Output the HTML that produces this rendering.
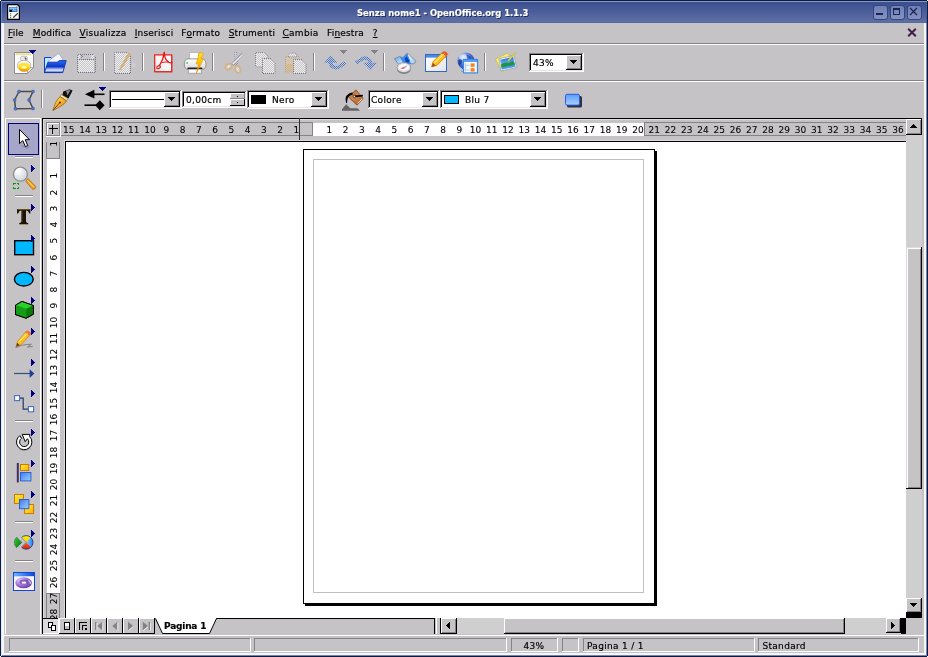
<!DOCTYPE html>
<html lang="it"><head><meta charset="utf-8"><title>Senza nome1 - OpenOffice.org 1.1.3</title>
<style>
html,body{margin:0;padding:0}
body{width:928px;height:657px;position:relative;overflow:hidden;background:#c6c3c6;font-family:"DejaVu Sans","Liberation Sans",sans-serif;font-size:9px;color:#000}
body div,body span,body svg{position:absolute;display:block}
.t{white-space:nowrap;line-height:11px;font-size:9px;-webkit-text-stroke:0.18px currentColor}
.t u{text-decoration:underline;text-decoration-thickness:1px;text-underline-offset:1px;display:inline;position:static}
.r,.v{-webkit-text-stroke:0.08px currentColor}
.s{letter-spacing:.32px}
.v{width:20px;height:11px;text-align:center;transform:rotate(-90deg);transform-origin:50% 50%}
svg{overflow:visible}
</style></head><body><div id="w" style="left:0;top:0;width:928px;height:657px;will-change:transform">
<div style="left:0;top:0;width:928px;height:23px;background:linear-gradient(#3e5494 0px,#3a5090 3px,#42558f 6px,#46599a 9px,#4c5d99 12px,#52639d 15px,#5869a1 18px,#5c6ea2 21.5px,#566a9f 22px,#566a9f 23px)"></div>
<div style="left:0px;top:0px;width:928px;height:1px;background:#0e1a40;"></div>
<div style="left:1px;top:1px;width:926px;height:1px;background:#8898c6;"></div>
<div style="left:0px;top:1px;width:1px;height:656px;background:#0c1a48;"></div>
<div style="left:1px;top:2px;width:1px;height:21px;background:#7488c0;"></div>
<div style="left:1px;top:23px;width:1px;height:633px;background:#e4e6f2;"></div>
<div style="left:2px;top:23px;width:2px;height:632px;background:#f6f6f6;"></div>
<div style="left:927px;top:1px;width:1px;height:656px;background:#0c1a48;"></div>
<div style="left:926px;top:2px;width:1px;height:21px;background:#4a5c98;"></div>
<div style="left:926px;top:23px;width:1px;height:633px;background:#7a84a6;"></div>
<div style="left:924px;top:23px;width:2px;height:632px;background:#f6f6f6;"></div>
<div style="left:0px;top:656px;width:928px;height:1px;background:#0c1a48;"></div>
<div style="left:2px;top:655px;width:925px;height:1px;background:#7a84a6;"></div>
<div style="left:2px;top:653px;width:924px;height:2px;background:#f6f6f6;"></div>
<div style="left:1px;top:653px;width:1px;height:3px;background:#e4e6f2;"></div>
<div style="left:0px;top:0px;width:1px;height:1px;background:#ffffff;"></div>
<div style="left:927px;top:0px;width:1px;height:1px;background:#ffffff;"></div>
<div style="left:0px;top:656px;width:1px;height:1px;background:#ffffff;"></div>
<div style="left:927px;top:656px;width:1px;height:1px;background:#ffffff;"></div>
<svg style="left:7px;top:4px" width="13" height="16" viewBox="0 0 13 16">
<path d="M0.6 0.6H10.4L12.4 2.6V15.4H0.6Z" fill="#f8f8f8" stroke="#000" stroke-width="1.2"/>
<path d="M9.2 1.2L11.8 3.8L9 3.6Z" fill="#b8b8b8"/>
<rect x="2" y="3" width="8.4" height="5" fill="#2a7cd4"/><rect x="2.6" y="3.6" width="7" height="1.6" fill="#8cc4f4"/>
<rect x="2.6" y="6" width="2.4" height="2" fill="#000"/><path d="M5.6 6.6L7 5.6L8 6.8L9 5.8" stroke="#d8ecff" stroke-width=".8" fill="none"/>
<rect x="3" y="9.2" width="1.2" height="1" fill="#555"/><rect x="3" y="11.2" width="1.2" height="1" fill="#555"/><rect x="3" y="13.2" width="1.2" height="1" fill="#555"/>
<path d="M6.2 13.6L10.8 9.2" stroke="#333" stroke-width="1.2"/>
</svg>
<span class="t" style="left:357px;top:6px;font-family:DejaVu Sans Condensed,DejaVu Sans,sans-serif;font-weight:bold;font-size:9.4px;color:#fff;letter-spacing:0px;text-shadow:1px 1px 0 #1c2a5c;line-height:13px">Senza nome1 - OpenOffice.org 1.1.3</span>
<div style="left:873px;top:5px;width:15px;height:15px;box-sizing:border-box;border-radius:3px;border:1px solid #35457d;background:linear-gradient(#7080b6,#8491c1)"></div>
<div style="left:890px;top:5px;width:15px;height:15px;box-sizing:border-box;border-radius:3px;border:1px solid #35457d;background:linear-gradient(#7080b6,#8491c1)"></div>
<div style="left:907px;top:5px;width:15px;height:15px;box-sizing:border-box;border-radius:3px;border:1px solid #35457d;background:linear-gradient(#7080b6,#8491c1)"></div>
<div style="left:876px;top:13px;width:7px;height:2px;background:#1a2450;"></div>
<div style="left:893px;top:8px;width:7px;height:7px;background:transparent;box-sizing:border-box;border:1px solid #1a2450;border-top-width:2px"></div>
<svg style="left:909px;top:7px" width="9" height="9" viewBox="0 0 9 9"><path d="M1 1L8 8M8 1L1 8" stroke="#1a2450" stroke-width="1.3"/></svg>
<span class="t" style="left:8.0px;top:28px;letter-spacing:0.18px"><u>F</u>ile</span>
<span class="t" style="left:32.8px;top:28px;letter-spacing:0.12px"><u>M</u>odifica</span>
<span class="t" style="left:79.6px;top:28px;letter-spacing:0.25px"><u>V</u>isualizza</span>
<span class="t" style="left:134.7px;top:28px;letter-spacing:0.19px"><u>I</u>nserisci</span>
<span class="t" style="left:181.3px;top:28px;letter-spacing:0.23px">F<u>o</u>rmato</span>
<span class="t" style="left:228.7px;top:28px;letter-spacing:0.19px"><u>S</u>trumenti</span>
<span class="t" style="left:282.5px;top:28px;letter-spacing:0.28px"><u>C</u>ambia</span>
<span class="t" style="left:327.1px;top:28px;letter-spacing:0.15px">Fi<u>n</u>estra</span>
<span class="t" style="left:372.8px;top:28px;letter-spacing:0.00px"><u>?</u></span>
<svg style="left:907px;top:28px" width="10" height="9" viewBox="0 0 10 9"><path d="M1.2 0.8L8.8 8.2M8.8 0.8L1.2 8.2" stroke="#42204a" stroke-width="2.1"/></svg>
<div style="left:4px;top:43px;width:920px;height:1px;background:#848284;"></div>
<div style="left:4px;top:44px;width:920px;height:1px;background:#ffffff;"></div>
<div style="left:4px;top:80px;width:920px;height:1px;background:#848284;"></div>
<div style="left:4px;top:81px;width:920px;height:1px;background:#ffffff;"></div>
<div style="left:103px;top:53px;width:1px;height:18px;background:#848284;"></div>
<div style="left:104px;top:53px;width:1px;height:18px;background:#ffffff;"></div>
<div style="left:142px;top:53px;width:1px;height:18px;background:#848284;"></div>
<div style="left:143px;top:53px;width:1px;height:18px;background:#ffffff;"></div>
<div style="left:212px;top:53px;width:1px;height:18px;background:#848284;"></div>
<div style="left:213px;top:53px;width:1px;height:18px;background:#ffffff;"></div>
<div style="left:313px;top:53px;width:1px;height:18px;background:#848284;"></div>
<div style="left:314px;top:53px;width:1px;height:18px;background:#ffffff;"></div>
<div style="left:383px;top:53px;width:1px;height:18px;background:#848284;"></div>
<div style="left:384px;top:53px;width:1px;height:18px;background:#ffffff;"></div>
<div style="left:484px;top:53px;width:1px;height:18px;background:#848284;"></div>
<div style="left:485px;top:53px;width:1px;height:18px;background:#ffffff;"></div>
<div style="left:529px;top:53px;width:55px;height:19px;background:#ffffff;"></div>
<div style="left:529px;top:53px;width:55px;height:1px;background:#848284;"></div>
<div style="left:529px;top:53px;width:1px;height:19px;background:#848284;"></div>
<div style="left:530px;top:54px;width:53px;height:1px;background:#000000;"></div>
<div style="left:530px;top:54px;width:1px;height:17px;background:#000000;"></div>
<div style="left:529px;top:71px;width:55px;height:1px;background:#ffffff;"></div>
<div style="left:583px;top:53px;width:1px;height:19px;background:#ffffff;"></div>
<div style="left:530px;top:70px;width:53px;height:1px;background:#e7e3e7;"></div>
<div style="left:582px;top:54px;width:1px;height:17px;background:#e7e3e7;"></div>
<div style="left:566px;top:55px;width:16px;height:15px;background:#c6c3c6;"></div>
<div style="left:566px;top:55px;width:16px;height:1px;background:#ffffff;"></div>
<div style="left:566px;top:55px;width:1px;height:15px;background:#ffffff;"></div>
<div style="left:567px;top:68px;width:14px;height:1px;background:#848284;"></div>
<div style="left:580px;top:56px;width:1px;height:13px;background:#848284;"></div>
<div style="left:566px;top:69px;width:16px;height:1px;background:#000000;"></div>
<div style="left:581px;top:55px;width:1px;height:15px;background:#000000;"></div>
<div style="left:570px;top:60px;width:7px;height:1px;background:#000000;"></div>
<div style="left:571px;top:61px;width:5px;height:1px;background:#000000;"></div>
<div style="left:572px;top:62px;width:3px;height:1px;background:#000000;"></div>
<div style="left:573px;top:63px;width:1px;height:1px;background:#000000;"></div>
<span class="t s" style="left:533px;top:58px;">43%</span>
<div style="left:41px;top:90px;width:1px;height:18px;background:#848284;"></div>
<div style="left:42px;top:90px;width:1px;height:18px;background:#ffffff;"></div>
<div style="left:109px;top:90px;width:73px;height:19px;background:#ffffff;"></div>
<div style="left:109px;top:90px;width:73px;height:1px;background:#848284;"></div>
<div style="left:109px;top:90px;width:1px;height:19px;background:#848284;"></div>
<div style="left:110px;top:91px;width:71px;height:1px;background:#000000;"></div>
<div style="left:110px;top:91px;width:1px;height:17px;background:#000000;"></div>
<div style="left:109px;top:108px;width:73px;height:1px;background:#ffffff;"></div>
<div style="left:181px;top:90px;width:1px;height:19px;background:#ffffff;"></div>
<div style="left:110px;top:107px;width:71px;height:1px;background:#e7e3e7;"></div>
<div style="left:180px;top:91px;width:1px;height:17px;background:#e7e3e7;"></div>
<div style="left:164px;top:92px;width:16px;height:15px;background:#c6c3c6;"></div>
<div style="left:164px;top:92px;width:16px;height:1px;background:#ffffff;"></div>
<div style="left:164px;top:92px;width:1px;height:15px;background:#ffffff;"></div>
<div style="left:165px;top:105px;width:14px;height:1px;background:#848284;"></div>
<div style="left:178px;top:93px;width:1px;height:13px;background:#848284;"></div>
<div style="left:164px;top:106px;width:16px;height:1px;background:#000000;"></div>
<div style="left:179px;top:92px;width:1px;height:15px;background:#000000;"></div>
<div style="left:168px;top:97px;width:7px;height:1px;background:#000000;"></div>
<div style="left:169px;top:98px;width:5px;height:1px;background:#000000;"></div>
<div style="left:170px;top:99px;width:3px;height:1px;background:#000000;"></div>
<div style="left:171px;top:100px;width:1px;height:1px;background:#000000;"></div>
<div style="left:112px;top:99px;width:52px;height:1px;background:#000000;"></div>
<div style="left:182px;top:91px;width:65px;height:17px;background:#ffffff;"></div>
<div style="left:182px;top:91px;width:65px;height:1px;background:#848284;"></div>
<div style="left:182px;top:91px;width:1px;height:17px;background:#848284;"></div>
<div style="left:183px;top:92px;width:63px;height:1px;background:#000000;"></div>
<div style="left:183px;top:92px;width:1px;height:15px;background:#000000;"></div>
<div style="left:182px;top:107px;width:65px;height:1px;background:#ffffff;"></div>
<div style="left:246px;top:91px;width:1px;height:17px;background:#ffffff;"></div>
<div style="left:183px;top:106px;width:63px;height:1px;background:#e7e3e7;"></div>
<div style="left:245px;top:92px;width:1px;height:15px;background:#e7e3e7;"></div>
<span class="t s" style="left:186px;top:95px;">0,00cm</span>
<div style="left:230px;top:93px;width:15px;height:6px;background:#c6c3c6;"></div>
<div style="left:230px;top:93px;width:15px;height:1px;background:#ffffff;"></div>
<div style="left:230px;top:93px;width:1px;height:6px;background:#ffffff;"></div>
<div style="left:230px;top:98px;width:15px;height:1px;background:#848284;"></div>
<div style="left:244px;top:93px;width:1px;height:6px;background:#848284;"></div>
<div style="left:230px;top:99px;width:15px;height:7px;background:#c6c3c6;"></div>
<div style="left:230px;top:99px;width:15px;height:1px;background:#ffffff;"></div>
<div style="left:230px;top:99px;width:1px;height:7px;background:#ffffff;"></div>
<div style="left:230px;top:105px;width:15px;height:1px;background:#000000;"></div>
<div style="left:244px;top:99px;width:1px;height:7px;background:#000000;"></div>
<div style="left:237px;top:96px;width:1px;height:1px;background:#000000;"></div>
<div style="left:237px;top:102px;width:1px;height:1px;background:#000000;"></div>
<div style="left:247px;top:90px;width:82px;height:19px;background:#ffffff;"></div>
<div style="left:247px;top:90px;width:82px;height:1px;background:#848284;"></div>
<div style="left:247px;top:90px;width:1px;height:19px;background:#848284;"></div>
<div style="left:248px;top:91px;width:80px;height:1px;background:#000000;"></div>
<div style="left:248px;top:91px;width:1px;height:17px;background:#000000;"></div>
<div style="left:247px;top:108px;width:82px;height:1px;background:#ffffff;"></div>
<div style="left:328px;top:90px;width:1px;height:19px;background:#ffffff;"></div>
<div style="left:248px;top:107px;width:80px;height:1px;background:#e7e3e7;"></div>
<div style="left:327px;top:91px;width:1px;height:17px;background:#e7e3e7;"></div>
<div style="left:311px;top:92px;width:16px;height:15px;background:#c6c3c6;"></div>
<div style="left:311px;top:92px;width:16px;height:1px;background:#ffffff;"></div>
<div style="left:311px;top:92px;width:1px;height:15px;background:#ffffff;"></div>
<div style="left:312px;top:105px;width:14px;height:1px;background:#848284;"></div>
<div style="left:325px;top:93px;width:1px;height:13px;background:#848284;"></div>
<div style="left:311px;top:106px;width:16px;height:1px;background:#000000;"></div>
<div style="left:326px;top:92px;width:1px;height:15px;background:#000000;"></div>
<div style="left:315px;top:97px;width:7px;height:1px;background:#000000;"></div>
<div style="left:316px;top:98px;width:5px;height:1px;background:#000000;"></div>
<div style="left:317px;top:99px;width:3px;height:1px;background:#000000;"></div>
<div style="left:318px;top:100px;width:1px;height:1px;background:#000000;"></div>
<div style="left:251px;top:95px;width:15px;height:9px;background:#000000;"></div>
<span class="t s" style="left:272px;top:95px;">Nero</span>
<div style="left:368px;top:90px;width:72px;height:19px;background:#ffffff;"></div>
<div style="left:368px;top:90px;width:72px;height:1px;background:#848284;"></div>
<div style="left:368px;top:90px;width:1px;height:19px;background:#848284;"></div>
<div style="left:369px;top:91px;width:70px;height:1px;background:#000000;"></div>
<div style="left:369px;top:91px;width:1px;height:17px;background:#000000;"></div>
<div style="left:368px;top:108px;width:72px;height:1px;background:#ffffff;"></div>
<div style="left:439px;top:90px;width:1px;height:19px;background:#ffffff;"></div>
<div style="left:369px;top:107px;width:70px;height:1px;background:#e7e3e7;"></div>
<div style="left:438px;top:91px;width:1px;height:17px;background:#e7e3e7;"></div>
<div style="left:422px;top:92px;width:16px;height:15px;background:#c6c3c6;"></div>
<div style="left:422px;top:92px;width:16px;height:1px;background:#ffffff;"></div>
<div style="left:422px;top:92px;width:1px;height:15px;background:#ffffff;"></div>
<div style="left:423px;top:105px;width:14px;height:1px;background:#848284;"></div>
<div style="left:436px;top:93px;width:1px;height:13px;background:#848284;"></div>
<div style="left:422px;top:106px;width:16px;height:1px;background:#000000;"></div>
<div style="left:437px;top:92px;width:1px;height:15px;background:#000000;"></div>
<div style="left:426px;top:97px;width:7px;height:1px;background:#000000;"></div>
<div style="left:427px;top:98px;width:5px;height:1px;background:#000000;"></div>
<div style="left:428px;top:99px;width:3px;height:1px;background:#000000;"></div>
<div style="left:429px;top:100px;width:1px;height:1px;background:#000000;"></div>
<span class="t s" style="left:371px;top:95px;">Colore</span>
<div style="left:440px;top:90px;width:108px;height:19px;background:#ffffff;"></div>
<div style="left:440px;top:90px;width:108px;height:1px;background:#848284;"></div>
<div style="left:440px;top:90px;width:1px;height:19px;background:#848284;"></div>
<div style="left:441px;top:91px;width:106px;height:1px;background:#000000;"></div>
<div style="left:441px;top:91px;width:1px;height:17px;background:#000000;"></div>
<div style="left:440px;top:108px;width:108px;height:1px;background:#ffffff;"></div>
<div style="left:547px;top:90px;width:1px;height:19px;background:#ffffff;"></div>
<div style="left:441px;top:107px;width:106px;height:1px;background:#e7e3e7;"></div>
<div style="left:546px;top:91px;width:1px;height:17px;background:#e7e3e7;"></div>
<div style="left:530px;top:92px;width:16px;height:15px;background:#c6c3c6;"></div>
<div style="left:530px;top:92px;width:16px;height:1px;background:#ffffff;"></div>
<div style="left:530px;top:92px;width:1px;height:15px;background:#ffffff;"></div>
<div style="left:531px;top:105px;width:14px;height:1px;background:#848284;"></div>
<div style="left:544px;top:93px;width:1px;height:13px;background:#848284;"></div>
<div style="left:530px;top:106px;width:16px;height:1px;background:#000000;"></div>
<div style="left:545px;top:92px;width:1px;height:15px;background:#000000;"></div>
<div style="left:534px;top:97px;width:7px;height:1px;background:#000000;"></div>
<div style="left:535px;top:98px;width:5px;height:1px;background:#000000;"></div>
<div style="left:536px;top:99px;width:3px;height:1px;background:#000000;"></div>
<div style="left:537px;top:100px;width:1px;height:1px;background:#000000;"></div>
<div style="left:444px;top:95px;width:15px;height:9px;background:#00baff;box-sizing:border-box;border:1px solid #000"></div>
<span class="t s" style="left:465px;top:95px;">Blu 7</span>
<div style="left:42px;top:118px;width:880px;height:1px;background:#000000;"></div>
<div style="left:42px;top:118px;width:1px;height:516px;background:#000000;"></div>
<div style="left:43px;top:119px;width:863px;height:1px;background:#dedbde;"></div>
<div style="left:43px;top:119px;width:1px;height:499px;background:#dedbde;"></div>
<div style="left:5px;top:118px;width:36px;height:1px;background:#ffffff;"></div>
<div style="left:5px;top:118px;width:1px;height:517px;background:#ffffff;"></div>
<div style="left:40px;top:118px;width:1px;height:516px;background:#ffffff;"></div>
<div style="left:15px;top:156px;width:18px;height:1px;background:#848284;"></div>
<div style="left:15px;top:157px;width:18px;height:1px;background:#ffffff;"></div>
<div style="left:15px;top:195px;width:18px;height:1px;background:#848284;"></div>
<div style="left:15px;top:196px;width:18px;height:1px;background:#ffffff;"></div>
<div style="left:15px;top:420px;width:18px;height:1px;background:#848284;"></div>
<div style="left:15px;top:421px;width:18px;height:1px;background:#ffffff;"></div>
<div style="left:15px;top:521px;width:18px;height:1px;background:#848284;"></div>
<div style="left:15px;top:522px;width:18px;height:1px;background:#ffffff;"></div>
<div style="left:15px;top:560px;width:18px;height:1px;background:#848284;"></div>
<div style="left:15px;top:561px;width:18px;height:1px;background:#ffffff;"></div>
<div style="left:8px;top:123px;width:31px;height:32px;background:#a5a6c8;box-sizing:border-box;border:1px solid #000084"></div>
<div style="left:46px;top:122px;width:15px;height:1px;background:#848284;"></div>
<div style="left:46px;top:122px;width:1px;height:15px;background:#848284;"></div>
<div style="left:47px;top:123px;width:13px;height:1px;background:#ffffff;"></div>
<div style="left:47px;top:123px;width:1px;height:13px;background:#ffffff;"></div>
<div style="left:47px;top:135px;width:13px;height:1px;background:#848284;"></div>
<div style="left:59px;top:123px;width:1px;height:13px;background:#848284;"></div>
<div style="left:46px;top:136px;width:15px;height:1px;background:#ffffff;"></div>
<div style="left:60px;top:122px;width:1px;height:15px;background:#ffffff;"></div>
<div style="left:52px;top:125px;width:1px;height:9px;background:#000000;"></div>
<div style="left:49px;top:128px;width:9px;height:1px;background:#000000;"></div>
<div style="left:61px;top:122px;width:252px;height:1px;background:#848284;"></div>
<div style="left:61px;top:135px;width:252px;height:1px;background:#848284;"></div>
<div style="left:312px;top:122px;width:1px;height:14px;background:#848284;"></div>
<div style="left:644px;top:122px;width:262px;height:1px;background:#848284;"></div>
<div style="left:644px;top:135px;width:262px;height:1px;background:#848284;"></div>
<div style="left:644px;top:122px;width:1px;height:14px;background:#848284;"></div>
<div style="left:313px;top:123px;width:331px;height:13px;background:#ffffff;"></div>
<div style="left:299px;top:118px;width:1px;height:23px;background:#303030;"></div>
<span class="t r" style="left:286.25px;top:125px;width:20px;text-align:center">1</span>
<span class="t r" style="left:270.0px;top:125px;width:20px;text-align:center">2</span>
<span class="t r" style="left:253.75px;top:125px;width:20px;text-align:center">3</span>
<span class="t r" style="left:237.5px;top:125px;width:20px;text-align:center">4</span>
<span class="t r" style="left:221.25px;top:125px;width:20px;text-align:center">5</span>
<span class="t r" style="left:205.0px;top:125px;width:20px;text-align:center">6</span>
<span class="t r" style="left:188.75px;top:125px;width:20px;text-align:center">7</span>
<span class="t r" style="left:172.5px;top:125px;width:20px;text-align:center">8</span>
<span class="t r" style="left:156.25px;top:125px;width:20px;text-align:center">9</span>
<span class="t r" style="left:140.0px;top:125px;width:20px;text-align:center">10</span>
<span class="t r" style="left:123.75px;top:125px;width:20px;text-align:center">11</span>
<span class="t r" style="left:107.5px;top:125px;width:20px;text-align:center">12</span>
<span class="t r" style="left:91.25px;top:125px;width:20px;text-align:center">13</span>
<span class="t r" style="left:75.0px;top:125px;width:20px;text-align:center">14</span>
<span class="t r" style="left:58.75px;top:125px;width:20px;text-align:center">15</span>
<span class="t r" style="left:319.25px;top:125px;width:20px;text-align:center">1</span>
<span class="t r" style="left:335.5px;top:125px;width:20px;text-align:center">2</span>
<span class="t r" style="left:351.75px;top:125px;width:20px;text-align:center">3</span>
<span class="t r" style="left:368.0px;top:125px;width:20px;text-align:center">4</span>
<span class="t r" style="left:384.25px;top:125px;width:20px;text-align:center">5</span>
<span class="t r" style="left:400.5px;top:125px;width:20px;text-align:center">6</span>
<span class="t r" style="left:416.75px;top:125px;width:20px;text-align:center">7</span>
<span class="t r" style="left:433.0px;top:125px;width:20px;text-align:center">8</span>
<span class="t r" style="left:449.25px;top:125px;width:20px;text-align:center">9</span>
<span class="t r" style="left:465.5px;top:125px;width:20px;text-align:center">10</span>
<span class="t r" style="left:481.75px;top:125px;width:20px;text-align:center">11</span>
<span class="t r" style="left:498.0px;top:125px;width:20px;text-align:center">12</span>
<span class="t r" style="left:514.25px;top:125px;width:20px;text-align:center">13</span>
<span class="t r" style="left:530.5px;top:125px;width:20px;text-align:center">14</span>
<span class="t r" style="left:546.75px;top:125px;width:20px;text-align:center">15</span>
<span class="t r" style="left:563.0px;top:125px;width:20px;text-align:center">16</span>
<span class="t r" style="left:579.25px;top:125px;width:20px;text-align:center">17</span>
<span class="t r" style="left:595.5px;top:125px;width:20px;text-align:center">18</span>
<span class="t r" style="left:611.75px;top:125px;width:20px;text-align:center">19</span>
<span class="t r" style="left:628.0px;top:125px;width:20px;text-align:center">20</span>
<span class="t r" style="left:644.25px;top:125px;width:20px;text-align:center">21</span>
<span class="t r" style="left:660.5px;top:125px;width:20px;text-align:center">22</span>
<span class="t r" style="left:676.75px;top:125px;width:20px;text-align:center">23</span>
<span class="t r" style="left:693.0px;top:125px;width:20px;text-align:center">24</span>
<span class="t r" style="left:709.25px;top:125px;width:20px;text-align:center">25</span>
<span class="t r" style="left:725.5px;top:125px;width:20px;text-align:center">26</span>
<span class="t r" style="left:741.75px;top:125px;width:20px;text-align:center">27</span>
<span class="t r" style="left:758.0px;top:125px;width:20px;text-align:center">28</span>
<span class="t r" style="left:774.25px;top:125px;width:20px;text-align:center">29</span>
<span class="t r" style="left:790.5px;top:125px;width:20px;text-align:center">30</span>
<span class="t r" style="left:806.75px;top:125px;width:20px;text-align:center">31</span>
<span class="t r" style="left:823.0px;top:125px;width:20px;text-align:center">32</span>
<span class="t r" style="left:839.25px;top:125px;width:20px;text-align:center">33</span>
<span class="t r" style="left:855.5px;top:125px;width:20px;text-align:center">34</span>
<span class="t r" style="left:871.75px;top:125px;width:20px;text-align:center">35</span>
<span class="t r" style="left:888.0px;top:125px;width:20px;text-align:center">36</span>
<div style="left:46px;top:142px;width:1px;height:17px;background:#848284;"></div>
<div style="left:59px;top:142px;width:1px;height:17px;background:#848284;"></div>
<div style="left:46px;top:158px;width:14px;height:1px;background:#848284;"></div>
<div style="left:46px;top:593px;width:1px;height:25px;background:#848284;"></div>
<div style="left:59px;top:593px;width:1px;height:25px;background:#848284;"></div>
<div style="left:46px;top:593px;width:14px;height:1px;background:#848284;"></div>
<div style="left:47px;top:159px;width:13px;height:434px;background:#ffffff;"></div>
<div style="left:44px;top:142px;width:18px;height:476px;overflow:hidden">
<span class="t v" style="left:0px;top:-4.25px">1</span>
<span class="t v" style="left:0px;top:28.25px">1</span>
<span class="t v" style="left:0px;top:44.50px">2</span>
<span class="t v" style="left:0px;top:60.75px">3</span>
<span class="t v" style="left:0px;top:77.00px">4</span>
<span class="t v" style="left:0px;top:93.25px">5</span>
<span class="t v" style="left:0px;top:109.50px">6</span>
<span class="t v" style="left:0px;top:125.75px">7</span>
<span class="t v" style="left:0px;top:142.00px">8</span>
<span class="t v" style="left:0px;top:158.25px">9</span>
<span class="t v" style="left:0px;top:174.50px">10</span>
<span class="t v" style="left:0px;top:190.75px">11</span>
<span class="t v" style="left:0px;top:207.00px">12</span>
<span class="t v" style="left:0px;top:223.25px">13</span>
<span class="t v" style="left:0px;top:239.50px">14</span>
<span class="t v" style="left:0px;top:255.75px">15</span>
<span class="t v" style="left:0px;top:272.00px">16</span>
<span class="t v" style="left:0px;top:288.25px">17</span>
<span class="t v" style="left:0px;top:304.50px">18</span>
<span class="t v" style="left:0px;top:320.75px">19</span>
<span class="t v" style="left:0px;top:337.00px">20</span>
<span class="t v" style="left:0px;top:353.25px">21</span>
<span class="t v" style="left:0px;top:369.50px">22</span>
<span class="t v" style="left:0px;top:385.75px">23</span>
<span class="t v" style="left:0px;top:402.00px">24</span>
<span class="t v" style="left:0px;top:418.25px">25</span>
<span class="t v" style="left:0px;top:434.50px">26</span>
<span class="t v" style="left:0px;top:450.75px">27</span>
<span class="t v" style="left:0px;top:467.00px">28</span>
</div>
<div style="left:64px;top:140px;width:842px;height:1px;background:#dedbde;"></div>
<div style="left:64px;top:140px;width:1px;height:478px;background:#dedbde;"></div>
<div style="left:65px;top:141px;width:841px;height:1px;background:#000000;"></div>
<div style="left:65px;top:141px;width:1px;height:477px;background:#000000;"></div>
<div style="left:66px;top:142px;width:840px;height:476px;background:#ffffff;"></div>
<div style="left:305px;top:151px;width:352px;height:455px;background:#000000;"></div>
<div style="left:303px;top:149px;width:352px;height:455px;background:#ffffff;box-sizing:border-box;border:1px solid #000"></div>
<div style="left:313px;top:159px;width:331px;height:434px;background:transparent;box-sizing:border-box;border:1px solid #c0c0c0"></div>
<div style="left:906px;top:119px;width:16px;height:499px;background:#cecfce;"></div>
<div style="left:906px;top:119px;width:16px;height:16px;background:#c6c3c6;"></div>
<div style="left:906px;top:119px;width:16px;height:1px;background:#ffffff;"></div>
<div style="left:906px;top:119px;width:1px;height:16px;background:#ffffff;"></div>
<div style="left:907px;top:133px;width:14px;height:1px;background:#848284;"></div>
<div style="left:920px;top:120px;width:1px;height:14px;background:#848284;"></div>
<div style="left:906px;top:134px;width:16px;height:1px;background:#000000;"></div>
<div style="left:921px;top:119px;width:1px;height:16px;background:#000000;"></div>
<div style="left:913px;top:124px;width:1px;height:1px;background:#000000;"></div>
<div style="left:912px;top:125px;width:3px;height:1px;background:#000000;"></div>
<div style="left:911px;top:126px;width:5px;height:1px;background:#000000;"></div>
<div style="left:910px;top:127px;width:7px;height:1px;background:#000000;"></div>
<div style="left:906px;top:247px;width:16px;height:242px;background:#c6c3c6;"></div>
<div style="left:906px;top:247px;width:16px;height:1px;background:#ffffff;"></div>
<div style="left:906px;top:247px;width:1px;height:242px;background:#ffffff;"></div>
<div style="left:907px;top:487px;width:14px;height:1px;background:#848284;"></div>
<div style="left:920px;top:248px;width:1px;height:240px;background:#848284;"></div>
<div style="left:906px;top:488px;width:16px;height:1px;background:#000000;"></div>
<div style="left:921px;top:247px;width:1px;height:242px;background:#000000;"></div>
<div style="left:906px;top:247px;width:1px;height:242px;background:#dedbde;"></div>
<div style="left:906px;top:247px;width:16px;height:1px;background:#dedbde;"></div>
<div style="left:907px;top:248px;width:1px;height:240px;background:#ffffff;"></div>
<div style="left:907px;top:248px;width:14px;height:1px;background:#ffffff;"></div>
<div style="left:906px;top:488px;width:16px;height:1px;background:#000000;"></div>
<div style="left:921px;top:247px;width:1px;height:242px;background:#000000;"></div>
<div style="left:906px;top:598px;width:16px;height:15px;background:#c6c3c6;"></div>
<div style="left:906px;top:598px;width:16px;height:1px;background:#ffffff;"></div>
<div style="left:906px;top:598px;width:1px;height:15px;background:#ffffff;"></div>
<div style="left:907px;top:611px;width:14px;height:1px;background:#848284;"></div>
<div style="left:920px;top:599px;width:1px;height:13px;background:#848284;"></div>
<div style="left:906px;top:612px;width:16px;height:1px;background:#000000;"></div>
<div style="left:921px;top:598px;width:1px;height:15px;background:#000000;"></div>
<div style="left:910px;top:603px;width:7px;height:1px;background:#000000;"></div>
<div style="left:911px;top:604px;width:5px;height:1px;background:#000000;"></div>
<div style="left:912px;top:605px;width:3px;height:1px;background:#000000;"></div>
<div style="left:913px;top:606px;width:1px;height:1px;background:#000000;"></div>
<div style="left:906px;top:613px;width:16px;height:5px;background:#000000;"></div>
<div style="left:906px;top:618px;width:16px;height:16px;background:#c6c3c6;"></div>
<div style="left:43px;top:618px;width:392px;height:16px;background:#c6c3c6;"></div>
<div style="left:43px;top:618px;width:16px;height:1px;background:#000000;"></div>
<div style="left:216px;top:618px;width:219px;height:1px;background:#000000;"></div>
<div style="left:434px;top:618px;width:1px;height:16px;background:#000000;"></div>
<div style="left:43px;top:619px;width:15px;height:14px;background:#dcdadc;"></div>
<div style="left:58px;top:618px;width:1px;height:16px;background:#ffffff;"></div>
<div style="left:43px;top:633px;width:16px;height:1px;background:#ffffff;"></div>
<div style="left:59px;top:618px;width:16px;height:16px;background:#c6c3c6;"></div>
<div style="left:59px;top:618px;width:16px;height:1px;background:#ffffff;"></div>
<div style="left:59px;top:618px;width:1px;height:16px;background:#ffffff;"></div>
<div style="left:59px;top:633px;width:16px;height:1px;background:#000000;"></div>
<div style="left:74px;top:618px;width:1px;height:16px;background:#000000;"></div>
<div style="left:75px;top:618px;width:16px;height:16px;background:#c6c3c6;"></div>
<div style="left:75px;top:618px;width:16px;height:1px;background:#ffffff;"></div>
<div style="left:75px;top:618px;width:1px;height:16px;background:#ffffff;"></div>
<div style="left:75px;top:633px;width:16px;height:1px;background:#000000;"></div>
<div style="left:90px;top:618px;width:1px;height:16px;background:#000000;"></div>
<div style="left:91px;top:618px;width:16px;height:16px;background:#c6c3c6;"></div>
<div style="left:91px;top:618px;width:16px;height:1px;background:#ffffff;"></div>
<div style="left:91px;top:618px;width:1px;height:16px;background:#ffffff;"></div>
<div style="left:91px;top:633px;width:16px;height:1px;background:#000000;"></div>
<div style="left:106px;top:618px;width:1px;height:16px;background:#000000;"></div>
<div style="left:107px;top:618px;width:16px;height:16px;background:#c6c3c6;"></div>
<div style="left:107px;top:618px;width:16px;height:1px;background:#ffffff;"></div>
<div style="left:107px;top:618px;width:1px;height:16px;background:#ffffff;"></div>
<div style="left:107px;top:633px;width:16px;height:1px;background:#000000;"></div>
<div style="left:122px;top:618px;width:1px;height:16px;background:#000000;"></div>
<div style="left:123px;top:618px;width:16px;height:16px;background:#c6c3c6;"></div>
<div style="left:123px;top:618px;width:16px;height:1px;background:#ffffff;"></div>
<div style="left:123px;top:618px;width:1px;height:16px;background:#ffffff;"></div>
<div style="left:123px;top:633px;width:16px;height:1px;background:#000000;"></div>
<div style="left:138px;top:618px;width:1px;height:16px;background:#000000;"></div>
<div style="left:139px;top:618px;width:16px;height:16px;background:#c6c3c6;"></div>
<div style="left:139px;top:618px;width:16px;height:1px;background:#ffffff;"></div>
<div style="left:139px;top:618px;width:1px;height:16px;background:#ffffff;"></div>
<div style="left:139px;top:633px;width:16px;height:1px;background:#000000;"></div>
<div style="left:154px;top:618px;width:1px;height:16px;background:#000000;"></div>
<svg style="left:154px;top:618px" width="66" height="16" viewBox="0 0 66 16"><path d="M1.5 0.5L8.5 15.5H55.5L62.5 0.5" fill="#fff" stroke="#000" stroke-width="1"/><rect x="2" y="0" width="60" height="1" fill="#fff"/></svg>
<span class="t" style="left:164px;top:621px;font-weight:bold;letter-spacing:-0.2px">Pagina 1</span>
<div style="left:436px;top:618px;width:1px;height:16px;background:#ffffff;"></div>
<div style="left:440px;top:618px;width:1px;height:16px;background:#000000;"></div>
<div style="left:441px;top:618px;width:465px;height:16px;background:#cecfce;"></div>
<div style="left:441px;top:618px;width:16px;height:16px;background:#c6c3c6;"></div>
<div style="left:441px;top:618px;width:16px;height:1px;background:#ffffff;"></div>
<div style="left:441px;top:618px;width:1px;height:16px;background:#ffffff;"></div>
<div style="left:442px;top:632px;width:14px;height:1px;background:#848284;"></div>
<div style="left:455px;top:619px;width:1px;height:14px;background:#848284;"></div>
<div style="left:441px;top:633px;width:16px;height:1px;background:#000000;"></div>
<div style="left:456px;top:618px;width:1px;height:16px;background:#000000;"></div>
<div style="left:449px;top:622px;width:1px;height:7px;background:#000000;"></div>
<div style="left:448px;top:623px;width:1px;height:5px;background:#000000;"></div>
<div style="left:447px;top:624px;width:1px;height:3px;background:#000000;"></div>
<div style="left:446px;top:625px;width:1px;height:1px;background:#000000;"></div>
<div style="left:504px;top:618px;width:341px;height:16px;background:#c6c3c6;"></div>
<div style="left:504px;top:618px;width:341px;height:1px;background:#ffffff;"></div>
<div style="left:504px;top:618px;width:1px;height:16px;background:#ffffff;"></div>
<div style="left:505px;top:632px;width:339px;height:1px;background:#848284;"></div>
<div style="left:843px;top:619px;width:1px;height:14px;background:#848284;"></div>
<div style="left:504px;top:633px;width:341px;height:1px;background:#000000;"></div>
<div style="left:844px;top:618px;width:1px;height:16px;background:#000000;"></div>
<div style="left:886px;top:618px;width:15px;height:15px;background:#c6c3c6;"></div>
<div style="left:886px;top:618px;width:15px;height:1px;background:#ffffff;"></div>
<div style="left:886px;top:618px;width:1px;height:15px;background:#ffffff;"></div>
<div style="left:887px;top:631px;width:13px;height:1px;background:#848284;"></div>
<div style="left:899px;top:619px;width:1px;height:13px;background:#848284;"></div>
<div style="left:886px;top:632px;width:15px;height:1px;background:#000000;"></div>
<div style="left:900px;top:618px;width:1px;height:15px;background:#000000;"></div>
<div style="left:891px;top:622px;width:1px;height:7px;background:#000000;"></div>
<div style="left:892px;top:623px;width:1px;height:5px;background:#000000;"></div>
<div style="left:893px;top:624px;width:1px;height:3px;background:#000000;"></div>
<div style="left:894px;top:625px;width:1px;height:1px;background:#000000;"></div>
<div style="left:901px;top:618px;width:5px;height:16px;background:#000000;"></div>
<div style="left:4px;top:634px;width:920px;height:1px;background:#c6c3c6;"></div>
<div style="left:4px;top:635px;width:920px;height:1px;background:#ffffff;"></div>
<div style="left:9px;top:638px;width:242px;height:1px;background:#848284;"></div>
<div style="left:9px;top:638px;width:1px;height:14px;background:#848284;"></div>
<div style="left:9px;top:651px;width:242px;height:1px;background:#ffffff;"></div>
<div style="left:250px;top:638px;width:1px;height:14px;background:#ffffff;"></div>
<div style="left:254px;top:638px;width:253px;height:1px;background:#848284;"></div>
<div style="left:254px;top:638px;width:1px;height:14px;background:#848284;"></div>
<div style="left:254px;top:651px;width:253px;height:1px;background:#ffffff;"></div>
<div style="left:506px;top:638px;width:1px;height:14px;background:#ffffff;"></div>
<div style="left:511px;top:638px;width:47px;height:1px;background:#848284;"></div>
<div style="left:511px;top:638px;width:1px;height:14px;background:#848284;"></div>
<div style="left:511px;top:651px;width:47px;height:1px;background:#ffffff;"></div>
<div style="left:557px;top:638px;width:1px;height:14px;background:#ffffff;"></div>
<div style="left:562px;top:638px;width:17px;height:1px;background:#848284;"></div>
<div style="left:562px;top:638px;width:1px;height:14px;background:#848284;"></div>
<div style="left:562px;top:651px;width:17px;height:1px;background:#ffffff;"></div>
<div style="left:578px;top:638px;width:1px;height:14px;background:#ffffff;"></div>
<div style="left:583px;top:638px;width:172px;height:1px;background:#848284;"></div>
<div style="left:583px;top:638px;width:1px;height:14px;background:#848284;"></div>
<div style="left:583px;top:651px;width:172px;height:1px;background:#ffffff;"></div>
<div style="left:754px;top:638px;width:1px;height:14px;background:#ffffff;"></div>
<div style="left:758px;top:638px;width:161px;height:1px;background:#848284;"></div>
<div style="left:758px;top:638px;width:1px;height:14px;background:#848284;"></div>
<div style="left:758px;top:651px;width:161px;height:1px;background:#ffffff;"></div>
<div style="left:918px;top:638px;width:1px;height:14px;background:#ffffff;"></div>
<span class="t s" style="left:523.4px;top:641px;">43%</span>
<span class="t s" style="left:587px;top:641px;">Pagina 1 / 1</span>
<span class="t s" style="left:762.4px;top:641px;">Standard</span>
<svg style="left:0;top:0" width="0" height="0"><defs>
<pattern id="dW" width="2" height="2" patternUnits="userSpaceOnUse"><rect width="2" height="2" fill="#c6c3c6"/><rect x="0" y="0" width="1" height="1" fill="#f0f0f0"/><rect x="1" y="1" width="1" height="1" fill="#f0f0f0"/></pattern>
<pattern id="dG" width="2" height="2" patternUnits="userSpaceOnUse"><rect width="2" height="2" fill="#c6c3c6"/><rect x="0" y="0" width="1" height="1" fill="#9c9a9c"/><rect x="1" y="1" width="1" height="1" fill="#9c9a9c"/></pattern>
<pattern id="dD" width="2" height="2" patternUnits="userSpaceOnUse"><rect width="2" height="2" fill="#c6c3c6"/><rect x="0" y="0" width="1" height="1" fill="#6c7088"/><rect x="1" y="1" width="1" height="1" fill="#6c7088"/></pattern>
<pattern id="dO" width="2" height="2" patternUnits="userSpaceOnUse"><rect width="2" height="2" fill="#c6c3c6"/><rect x="0" y="0" width="1" height="1" fill="#e0a040"/><rect x="1" y="1" width="1" height="1" fill="#e0a040"/></pattern>
<pattern id="dY" width="2" height="2" patternUnits="userSpaceOnUse"><rect width="2" height="2" fill="#c6c3c6"/><rect x="0" y="0" width="1" height="1" fill="#e8c890"/><rect x="1" y="1" width="1" height="1" fill="#e8c890"/></pattern>
<pattern id="dB" width="2" height="2" patternUnits="userSpaceOnUse"><rect width="2" height="2" fill="#c6c3c6"/><rect x="0" y="0" width="1" height="1" fill="#5a8ae0"/><rect x="1" y="1" width="1" height="1" fill="#5a8ae0"/></pattern>
<pattern id="dU" width="2" height="2" patternUnits="userSpaceOnUse"><rect width="2" height="2" fill="#bec4d2"/><rect x="0" y="0" width="1" height="1" fill="#4e78c4"/><rect x="1" y="1" width="1" height="1" fill="#4e78c4"/></pattern>
<pattern id="dT" width="2" height="2" patternUnits="userSpaceOnUse"><rect width="2" height="2" fill="#c6c3c6"/><rect x="0" y="0" width="1" height="1" fill="#b8a070"/><rect x="1" y="1" width="1" height="1" fill="#b8a070"/></pattern>
<linearGradient id="gY" x1="0" y1="0" x2="0" y2="1"><stop offset="0" stop-color="#fff27a"/><stop offset=".55" stop-color="#ffd000"/><stop offset="1" stop-color="#f09000"/></linearGradient>
<linearGradient id="gF" x1="0" y1="0" x2="1" y2="1"><stop offset="0" stop-color="#0a3ac8"/><stop offset=".5" stop-color="#2a6cf0"/><stop offset="1" stop-color="#8cc0ff"/></linearGradient>
<linearGradient id="gB" x1="0" y1="0" x2="0" y2="1"><stop offset="0" stop-color="#5a9cff"/><stop offset="1" stop-color="#a8d0ff"/></linearGradient>
<linearGradient id="gB2" x1="0" y1="0" x2="1" y2="1"><stop offset="0" stop-color="#3a7cf0"/><stop offset="1" stop-color="#a0d0ff"/></linearGradient>
<linearGradient id="gYs" x1="0" y1="0" x2="1" y2="1"><stop offset="0" stop-color="#fff040"/><stop offset="1" stop-color="#ffb000"/></linearGradient>
<radialGradient id="gGl" cx=".35" cy=".3" r=".8"><stop offset="0" stop-color="#d8e8ff"/><stop offset=".5" stop-color="#4a78e0"/><stop offset="1" stop-color="#1030a0"/></radialGradient>
<radialGradient id="gLens" cx=".35" cy=".3" r=".8"><stop offset="0" stop-color="#ffffff"/><stop offset="1" stop-color="#c8d0d8"/></radialGradient>
<linearGradient id="gPen" x1="0" y1="0" x2="1" y2="1"><stop offset="0" stop-color="#ffe060"/><stop offset="1" stop-color="#f08000"/></linearGradient>
<linearGradient id="gCy" x1="0" y1="0" x2="1" y2="1"><stop offset="0" stop-color="#ffffff"/><stop offset="1" stop-color="#c8f0f0"/></linearGradient>
<linearGradient id="gSky" x1="0" y1="0" x2="0" y2="1"><stop offset="0" stop-color="#1a70d8"/><stop offset="1" stop-color="#b0e0ff"/></linearGradient>
<linearGradient id="gTor" x1="0" y1="0" x2="0" y2="1"><stop offset="0" stop-color="#c8b0e8"/><stop offset="1" stop-color="#7050a8"/></linearGradient>
</defs></svg>
<svg style="left:12px;top:48px" width="28" height="28" viewBox="12 48 28 28" >
<path d="M14.5 52.5H33.5V67.5L27.5 73.5H14.5Z" fill="#fcfcfc" stroke="#8c8c8c" stroke-width="1"/>
<rect x="15.5" y="53.4" width="15.6" height="1.7" fill="#ecdc90"/>
<path d="M27.5 73.2V67.7H33.2Z" fill="#fff" stroke="#8c8c8c" stroke-width=".8"/>
<rect x="20.6" y="56.3" width="6.8" height="4.6" rx="1.8" fill="#ececec" stroke="#a0a0a0" stroke-width=".6"/>
<path d="M24.6 57.2Q26.8 57 26.8 59.4L25 59.8Z" fill="#606060"/>
<ellipse cx="24.1" cy="65.8" rx="6.8" ry="5.6" fill="#f2f2f2" stroke="#a0a0a0" stroke-width=".7"/>
<ellipse cx="24.1" cy="67.1" rx="5.9" ry="4.3" fill="url(#gY)"/>
<ellipse cx="24.1" cy="65.2" rx="5.7" ry="2.1" fill="#ffe23a"/>
<ellipse cx="24.2" cy="67.6" rx="3" ry="1.1" fill="#fffad0"/>
<rect x="29" y="50" width="7" height="1" fill="#000084"/><rect x="30" y="51" width="5" height="1" fill="#000084"/><rect x="31" y="52" width="3" height="1" fill="#000084"/><rect x="32" y="53" width="1" height="1" fill="#000084"/></svg>
<svg style="left:42px;top:50px" width="28" height="26" viewBox="42 50 28 26" >
<defs><linearGradient id="gFl" x1="0" y1="0" x2="0" y2="1"><stop offset="0" stop-color="#2a6cf0"/><stop offset=".5" stop-color="#0a38c8"/><stop offset=".8" stop-color="#eceaff"/><stop offset="1" stop-color="#3058d8"/></linearGradient></defs>
<path d="M44.5 57.5H51L52.5 59H60V72.5H44.5Z" fill="#b8ecff" stroke="#1040d0" stroke-width="1"/>
<path d="M47.8 61.4L58 53.8L59.8 54.4L63.4 60.6L60 68H48Z" fill="#f8f4ff" stroke="#8890c8" stroke-width=".6"/>
<path d="M48 62.2H57.2L59.4 60.6H66.2L62.8 72.6H44.4Z" fill="url(#gFl)" stroke="#0a30b8" stroke-width=".9" stroke-linejoin="round"/>
</svg>
<svg style="left:76px;top:52px" width="22" height="22" viewBox="76 52 22 22" >
<path d="M78.5 54.5h15l1.5 1.5v15l-1 1.5H78l-.5-1.5V55.5z" fill="url(#dW)" stroke="url(#dD)" stroke-width="1"/>
<rect x="78" y="59" width="16" height="1" fill="url(#dD)"/>
<rect x="81" y="55" width="2" height="3" fill="url(#dD)"/>
<rect x="80" y="55" width="11" height="4" fill="url(#dG)" opacity=".45"/>
<path d="M95.5 56v15.5l-1 1H78" fill="none" stroke="url(#dD)" stroke-width="1"/>
</svg>
<svg style="left:112px;top:50px" width="26" height="26" viewBox="112 50 26 26" >
<path d="M114.5 52.5h13l3 3v18h-16z" fill="url(#dW)" stroke="url(#dD)" stroke-width=".8"/>
<path d="M130.5 56v17.5h-16" fill="none" stroke="url(#dD)" stroke-width="1"/>
<path d="M128.5 52L131 54L121.5 69.5L119 71.5L119.4 68.4Z" fill="url(#dO)"/>
<ellipse cx="133.6" cy="65" rx="2.2" ry="2.4" fill="#cfcdcf"/>
</svg>
<svg style="left:152px;top:50px" width="24" height="26" viewBox="152 50 24 26" >
<defs><linearGradient id="gPd" x1="1" y1="0" x2="0" y2="1"><stop offset="0" stop-color="#ffffff"/><stop offset=".6" stop-color="#f4f4f4"/><stop offset="1" stop-color="#c8ecec"/></linearGradient></defs>
<rect x="155.2" y="55.4" width="17.2" height="17" fill="#a04040" opacity=".55"/>
<rect x="154.7" y="54.9" width="17" height="16.8" fill="url(#gPd)" stroke="#f01818" stroke-width="1.2"/>
<path d="M164.3 52.4C163.8 57 161.6 62 159.4 65.6" fill="none" stroke="#f01010" stroke-width="1.3" stroke-linecap="round"/>
<ellipse cx="158.6" cy="67.2" rx="2" ry="1.3" transform="rotate(-30 158.6 67.2)" fill="none" stroke="#f01010" stroke-width="1.1"/>
<path d="M164.3 52.4C164.4 56.4 166 60.6 168.8 62.2C170.2 63 171.4 62.9 172 62.5" fill="none" stroke="#f01010" stroke-width="1.3" stroke-linecap="round"/>
<path d="M162.2 62.5Q165.6 61.6 168.8 62.2" fill="none" stroke="#f01010" stroke-width="1"/>
</svg>
<svg style="left:182px;top:50px" width="28" height="26" viewBox="182 50 28 26" >
<defs><linearGradient id="gBo" x1="0" y1="0" x2="0" y2="1"><stop offset="0" stop-color="#ffe818"/><stop offset=".5" stop-color="#ffc000"/><stop offset="1" stop-color="#f07800"/></linearGradient>
<linearGradient id="gPr" x1="0" y1="0" x2="0" y2="1"><stop offset="0" stop-color="#ffffff"/><stop offset="1" stop-color="#d8d8d8"/></linearGradient></defs>
<path d="M189.5 59.5V52.5H198.7V59.5" fill="#fdfdfd" stroke="#b4b4b4" stroke-width=".9"/>
<path d="M188 58.9H202Q206 59.4 206 64Q206 69.4 202 69.5H188Q184.3 69.4 184.3 64Q184.3 59.4 188 58.9Z" fill="url(#gPr)" stroke="#8c8c8c" stroke-width=".9"/>
<rect x="187.4" y="67.6" width="15" height="1.8" rx=".8" fill="#202020"/>
<path d="M188.4 69.4V73.3H201.4V69.4" fill="#fbfbfb" stroke="#a0a0a0" stroke-width=".9"/>
<rect x="186.3" y="62.2" width="1.7" height="1.5" fill="#30c850"/>
<path d="M199.4 52.4L203.4 53.2L201.2 58.7L203.6 59.1L196.2 73.4L198.6 64.3L196.2 63.9Z" fill="url(#gBo)" stroke="#e88800" stroke-width=".5" stroke-linejoin="round"/>
</svg>
<svg style="left:222px;top:50px" width="26" height="26" viewBox="222 50 26 26" >
<path d="M234.8 52.4L236.6 52.4L237.6 64L235.2 65Z" fill="url(#dW)" stroke="url(#dD)" stroke-width=".7"/>
<path d="M243.2 54.4L241.6 53.2L231.6 64L233.8 65.4Z" fill="url(#dW)" stroke="url(#dD)" stroke-width=".7"/>
<ellipse cx="228.6" cy="66.6" rx="3.5" ry="2.5" transform="rotate(-32 228.6 66.6)" fill="url(#dW)" stroke="url(#dO)" stroke-width="1.7"/>
<ellipse cx="237.8" cy="69.4" rx="2.5" ry="3.5" transform="rotate(-18 237.8 69.4)" fill="url(#dW)" stroke="url(#dO)" stroke-width="1.7"/>
</svg>
<svg style="left:253px;top:50px" width="26" height="26" viewBox="253 50 26 26" >
<path d="M255.5 52.5h8.5l4 4v10.5h-12.5z" fill="url(#dW)" stroke="url(#dD)" stroke-width=".8"/>
<path d="M262.5 58.5h8.5l4 4v11h-12.5z" fill="url(#dW)" stroke="url(#dD)" stroke-width=".9"/>
</svg>
<svg style="left:283px;top:50px" width="26" height="26" viewBox="283 50 26 26" >
<path d="M285.5 56.5h13.5v15.5h-13.5z" fill="url(#dY)" stroke="url(#dT)" stroke-width=".9"/>
<path d="M285.5 64h7.5v8h-7.5z" fill="url(#dO)" opacity=".6"/>
<path d="M288.6 57V55Q292.6 50.4 296.8 55V57Z" fill="url(#dW)" stroke="url(#dD)" stroke-width=".8"/>
<path d="M293.5 59.5h8.5l4 4v10h-12.5z" fill="url(#dW)" stroke="url(#dD)" stroke-width=".9"/>
</svg>
<svg style="left:322px;top:48px" width="28" height="26" viewBox="322 48 28 26" >
<path d="M330.4 62C330.4 67.2 336 69.2 340 66.4L345.2 62.6" fill="none" stroke="url(#dU)" stroke-width="3.6"/>
<path d="M330.8 55.4L337.2 62.8H324.2Z" fill="url(#dU)"/>
<rect x="340" y="50" width="7" height="1" fill="#848284"/><rect x="341" y="51" width="5" height="1" fill="#848284"/><rect x="342" y="52" width="3" height="1" fill="#848284"/><rect x="343" y="53" width="1" height="1" fill="#848284"/></svg>
<svg style="left:353px;top:48px" width="28" height="26" viewBox="353 48 28 26" >
<path d="M370.4 63.4C370.4 58.6 365 56.8 361.2 59.4L356 63" fill="none" stroke="url(#dU)" stroke-width="3.6"/>
<path d="M370.4 70.2L363 62.8H377Z" fill="url(#dU)"/>
<rect x="371" y="50" width="7" height="1" fill="#848284"/><rect x="372" y="51" width="5" height="1" fill="#848284"/><rect x="373" y="52" width="3" height="1" fill="#848284"/><rect x="374" y="53" width="1" height="1" fill="#848284"/></svg>
<svg style="left:392px;top:50px" width="26" height="26" viewBox="392 50 26 26" >
<defs><linearGradient id="gM1" x1="0" y1="0" x2="1" y2="1"><stop offset="0" stop-color="#58a4f4"/><stop offset="1" stop-color="#dceeff"/></linearGradient>
<linearGradient id="gM3" x1="0" y1="0" x2="1" y2="1"><stop offset="0" stop-color="#ffffff"/><stop offset="1" stop-color="#8cc4f8"/></linearGradient></defs>
<path d="M394.4 58.8L399.6 56.4L403.6 64L398.6 64.2Z" fill="url(#gM1)"/>
<path d="M399.6 56.4L402.6 57.8L407.4 53L411.2 63.9L403.6 64Z" fill="#3c8cf0"/>
<path d="M404.8 58.2L406.8 56.4L408.2 59.6L409.6 59.4L409 62.4L405.8 62.4Z" fill="#0a40b8"/>
<path d="M407.4 53L416 61.4L414.2 63.8L411.2 63.9Z" fill="url(#gM3)"/>
<path d="M394.4 58.8L399.6 56.4L402.6 57.8L407.4 53L416 61.4L414.2 63.8L398.6 64.2Z" fill="none" stroke="#606878" stroke-width=".6"/>
<ellipse cx="403.9" cy="69" rx="6.9" ry="5" fill="#7c7c7c"/>
<ellipse cx="403.9" cy="67.6" rx="6.9" ry="4.9" fill="#ececec" stroke="#8a8a8a" stroke-width=".8"/>
<ellipse cx="403.9" cy="67.2" rx="5.7" ry="3.7" fill="#fdfdff" stroke="#c0c8dc" stroke-width=".6"/>
<path d="M400.4 69L407.4 65.2L404.6 68.2Z" fill="#f01818"/>
<path d="M400.4 69L403.6 66.4L404.6 68.2Z" fill="#f86868"/>
<path d="M407.4 65.2L405.6 68.6L404 67.4Z" fill="#b0d0f4"/>
</svg>
<svg style="left:423px;top:50px" width="28" height="26" viewBox="423 50 28 26" >
<defs><linearGradient id="gSt" x1="0" y1="0" x2="1" y2="1"><stop offset="0" stop-color="#ffffff"/><stop offset="1" stop-color="#e4e4e8"/></linearGradient>
<linearGradient id="gPn3" x1="0" y1="0" x2="1" y2="1"><stop offset="0" stop-color="#fff27a"/><stop offset=".5" stop-color="#ffc418"/><stop offset="1" stop-color="#f08400"/></linearGradient></defs>
<rect x="425.5" y="54.5" width="21" height="17" fill="url(#gSt)" stroke="#3068c8" stroke-width="1"/>
<rect x="426" y="55" width="20" height="2.6" fill="#4c88e4"/>
<path d="M442.8 52Q446.4 50.8 447.8 54.4L437 65.4L431.6 67L433 61.6Z" fill="url(#gPn3)" stroke="#c06800" stroke-width=".6"/>
<path d="M442.8 52Q446.4 50.8 447.8 54.4L446.2 56L441.4 53.4Z" fill="#f05030"/>
<path d="M435 62.4L444.4 53.6" stroke="#fff8c0" stroke-width=".9"/>
<path d="M431.6 67L432.8 62.8L435.8 65.6Z" fill="#9a5418"/>
</svg>
<svg style="left:455px;top:50px" width="28" height="26" viewBox="455 50 28 26" >
<circle cx="466" cy="61" r="8.6" fill="url(#gGl)"/>
<ellipse cx="463.4" cy="57" rx="4.4" ry="2.8" fill="#fff" opacity=".45"/>
<path d="M458.4 60Q461 58 462.4 61.4Q461.4 64 459.4 66Q457.8 63 458.4 60Z" fill="#10287c" opacity=".7"/><path d="M466 54.6Q470 55 471.4 58.4L467.4 58.8Z" fill="#10287c" opacity=".5"/>
<path d="M461 71.6L466 70.6" stroke="#9a9a9a" stroke-width="1"/>
<rect x="463.5" y="59.5" width="14" height="13.4" fill="#f4f8ff" stroke="#3a88e8" stroke-width="1.2"/>
<rect x="464" y="60" width="13" height="2" fill="#5aa0f0"/>
<rect x="470.6" y="63.4" width="4" height="3.4" fill="#ff8010"/>
<rect x="470.6" y="68.2" width="4" height="3.4" fill="#ff8010"/>
<path d="M465.4 65.2H469.6M465.4 70H469.6M465.4 63.4V71.6" stroke="#a8c4e8" stroke-width=".9" fill="none"/>
</svg>
<svg style="left:493px;top:50px" width="28" height="26" viewBox="493 50 28 26" >
<path d="M495.4 59.2L507 53.3L510 56L502.4 72.4Z" fill="#f8ec70" stroke="#c0b040" stroke-width=".6"/>
<path d="M499 58.7L513.9 55.5L516.6 67.5L501 70.9Z" fill="#fdfdfd" stroke="#808890" stroke-width=".6"/>
<path d="M500.2 59.7L513.1 56.9L515.3 66.7L501.9 69.6Z" fill="url(#gSky)"/>
<path d="M500.9 64.6Q505 61.4 509 63Q512.4 60.4 514.4 62.6L515 65.4L501.6 68Z" fill="#1e9444"/>
<path d="M501.5 67.4L515 64.8L515.3 66.7L501.9 69.6Z" fill="#4a98f0"/>
<path d="M514.6 52.6L515.7 53.5L509 60.9L507.5 61.4L508 59.8Z" fill="#ecd858" stroke="#a09030" stroke-width=".4"/>
</svg>
<svg style="left:11px;top:88px" width="26" height="26" viewBox="11 88 26 26" >
<path d="M19 91.5L33 91.5L29 100L33 108.5L15.5 108.8L14.6 100Z" fill="none" stroke="#4a4a4a" stroke-width="1.5" stroke-linejoin="round"/>
<g fill="#4a7cd0" stroke="#2a509c" stroke-width=".5"><circle cx="19" cy="91.5" r="1.5"/><circle cx="33" cy="91.5" r="1.5"/><circle cx="29" cy="100" r="1.5"/><circle cx="33" cy="108.5" r="1.5"/><circle cx="15.5" cy="108.8" r="1.5"/><circle cx="14.6" cy="100" r="1.5"/></g>
</svg>
<svg style="left:50px;top:87px" width="26" height="26" viewBox="50 87 26 26" >
<path d="M63.2 91.6L69.6 89.2L72.6 90.4L68.4 98.4L62.4 95.6Z" fill="#101010"/>
<path d="M66 90.8L70.6 89.8L67.6 95.4Z" fill="#8c8c8c"/>
<path d="M61.2 94.4L67.8 98.6L66.6 100.6L60.2 96.6Z" fill="#f4e8b0" stroke="#8a6a10" stroke-width=".6"/>
<path d="M60.2 96.8L66.4 100.8C64.4 105 58.6 107 53 110.6C54.6 104.6 56.4 99.4 60.2 96.8Z" fill="url(#gPen)" stroke="#8a5a00" stroke-width=".7"/>
<path d="M53.2 110.2L59.6 102.8" stroke="#503000" stroke-width=".8"/>
<circle cx="60" cy="102.4" r="1" fill="#503000"/>
</svg>
<svg style="left:82px;top:85px" width="28" height="28" viewBox="82 85 28 28" >
<path d="M85 94.2L94.4 89.8L94.4 98.6Z" fill="#000"/><rect x="92" y="93.5" width="12.5" height="1.6" fill="#000"/>
<rect x="84.5" y="104.4" width="13" height="1.6" fill="#000"/><path d="M95.2 105.2L99.8 100.2L104.6 105.2L99.8 110.2Z" fill="#000"/>
<rect x="99" y="87" width="7" height="1" fill="#000084"/><rect x="100" y="88" width="5" height="1" fill="#000084"/><rect x="101" y="89" width="3" height="1" fill="#000084"/><rect x="102" y="90" width="1" height="1" fill="#000084"/></svg>
<svg style="left:340px;top:87px" width="28" height="28" viewBox="340 87 28 28" >
<defs><linearGradient id="gWd" x1="0" y1="0" x2="1" y2="1"><stop offset="0" stop-color="#b06a30"/><stop offset=".45" stop-color="#cc8850"/><stop offset=".8" stop-color="#b87038"/><stop offset="1" stop-color="#e8b080"/></linearGradient></defs>
<path d="M342 110.8V109.2L346.2 104.2L350.2 108.2H357.4L360 110.8Z" fill="#636163"/>
<path d="M356 89.8L363.2 98.4L357 105.2L348.2 96.8Z" fill="url(#gWd)" stroke="#7a4418" stroke-width=".7" stroke-linejoin="round"/>
<path d="M351 99.2L357.4 104.4" stroke="#8a4c1c" stroke-width=".6"/><path d="M357.6 103.6L362.2 98.8" stroke="#f4d0a8" stroke-width="1"/>
<path d="M353.6 92.2L359.6 99M351.4 94.2L357.6 101.2" stroke="#a05c28" stroke-width=".5" opacity=".8"/>
<path d="M352.4 92.6C348 93.4 346 95.6 345.6 98.4C345.5 100 346 101.4 346.2 103L347 103C347 101 347.4 99.4 348 97.6C349 96 350.6 95 352.8 94.6Z" fill="#000"/>
<path d="M354.4 96.4L362.8 95.7" stroke="#000" stroke-width="1.8"/>
<circle cx="354.3" cy="96.4" r="1.1" fill="#fff" stroke="#000" stroke-width=".6"/>
</svg>
<svg style="left:563px;top:92px" width="22" height="18" viewBox="563 92 22 18" >
<rect x="567" y="96" width="15" height="11.6" rx="1.5" fill="#303048"/>
<rect x="565.5" y="94.3" width="14" height="10.8" rx="1.5" fill="url(#gB)" stroke="#2a5ce0" stroke-width="1"/>
</svg>
<svg style="left:16px;top:126px" width="16" height="24" viewBox="16 126 16 24" >
<path d="M19.5 129.5V143.6L22.8 140.6L25.4 146.6L27.8 145.6L25.2 139.8L29.4 139.6Z" fill="#fff" stroke="#000" stroke-width="1" stroke-linejoin="miter"/>
<path d="M21 145.5L27 148L29.8 146.6" fill="none" stroke="#6a6a88" stroke-width="1" opacity=".55"/>
</svg>
<svg style="left:11px;top:163px" width="28" height="28" viewBox="11 163 28 28" >
<path d="M25.6 181L28 178.6L35.4 186.2Q36 188.4 34 189.2Q32.4 189.6 31.8 188.4Z" fill="#f0a020" stroke="#a86000" stroke-width=".7"/>
<path d="M27.4 180.4L33.6 187" stroke="#ffe090" stroke-width="1"/>
<circle cx="20.4" cy="174.2" r="7" fill="url(#gLens)" stroke="#8c8c8c" stroke-width="1.3"/>
<path d="M16 172Q17.4 168.6 21 168.4" fill="none" stroke="#fff" stroke-width="1.4"/>
<path d="M13.5 183.5h2M17 183.5h2M13.5 188.5h2M17 188.5h2M13.5 183v2M13.5 187v2M18.5 183v2M18.5 187v2" stroke="#00a000" stroke-width="1" shape-rendering="crispEdges"/>
<rect x="31" y="165" width="1" height="7" fill="#000084"/><rect x="32" y="166" width="1" height="5" fill="#000084"/><rect x="33" y="167" width="1" height="3" fill="#000084"/><rect x="34" y="168" width="1" height="1" fill="#000084"/></svg>
<svg style="left:14px;top:202px" width="24" height="26" viewBox="14 202 24 26" >
<path d="M17 209H30.4V213.4H29.2Q28.6 210.6 26 210.4V221.6Q26 223 28.2 223.2V224.2H19.2V223.2Q21.4 223 21.4 221.6V210.4Q18.8 210.6 18.2 213.4H17Z" fill="#1a1408"/>
<path d="M17.6 209.6H29.8" stroke="#8a6c18" stroke-width=".8"/><path d="M22 211V222" stroke="#5a4818" stroke-width=".8"/>
<path d="M19.6 224.6H28.4" stroke="#a08c50" stroke-width=".6"/>
<rect x="31" y="204" width="1" height="7" fill="#000084"/><rect x="32" y="205" width="1" height="5" fill="#000084"/><rect x="33" y="206" width="1" height="3" fill="#000084"/><rect x="34" y="207" width="1" height="1" fill="#000084"/></svg>
<svg style="left:12px;top:233px" width="26" height="26" viewBox="12 233 26 26" ><rect x="14.7" y="240.7" width="18.8" height="14" fill="#00b8ff" stroke="#000" stroke-width="1.4"/><rect x="31" y="235" width="1" height="7" fill="#000084"/><rect x="32" y="236" width="1" height="5" fill="#000084"/><rect x="33" y="237" width="1" height="3" fill="#000084"/><rect x="34" y="238" width="1" height="1" fill="#000084"/></svg>
<svg style="left:12px;top:264px" width="26" height="26" viewBox="12 264 26 26" ><ellipse cx="23.8" cy="279.2" rx="9.4" ry="6.8" fill="#00b8ff" stroke="#000" stroke-width="1.4"/><rect x="31" y="266" width="1" height="7" fill="#000084"/><rect x="32" y="267" width="1" height="5" fill="#000084"/><rect x="33" y="268" width="1" height="3" fill="#000084"/><rect x="34" y="269" width="1" height="1" fill="#000084"/></svg>
<svg style="left:12px;top:295px" width="26" height="26" viewBox="12 295 26 26" >
<path d="M15.5 305.2L22 301.4L33.4 305.6V314.2L26.2 318.2L15.5 314.6Z" fill="#0c8a0c" stroke="#000" stroke-width="1" stroke-linejoin="round"/>
<path d="M15.5 305.2L22 301.4L33.4 305.6L26.2 309Z" fill="#28d028"/>
<path d="M26.2 309L33.4 305.6V314.2L26.2 318.2Z" fill="#0a7a0a"/>
<path d="M15.5 305.2L26.2 309V318.2L15.5 314.6Z" fill="#149c14"/>
<path d="M15.5 305.2L22 301.4L33.4 305.6V314.2L26.2 318.2L15.5 314.6Z" fill="none" stroke="#000" stroke-width="1" stroke-linejoin="round"/>
<rect x="31" y="297" width="1" height="7" fill="#000084"/><rect x="32" y="298" width="1" height="5" fill="#000084"/><rect x="33" y="299" width="1" height="3" fill="#000084"/><rect x="34" y="300" width="1" height="1" fill="#000084"/></svg>
<svg style="left:12px;top:326px" width="26" height="26" viewBox="12 326 26 26" >
<defs><linearGradient id="gPn2" x1="0" y1="0" x2="1" y2="1"><stop offset="0" stop-color="#fff070"/><stop offset=".5" stop-color="#ffc418"/><stop offset="1" stop-color="#f08800"/></linearGradient></defs>
<path d="M26.4 331Q29.8 330.4 31 333.8L21 344.8L16 346.8L17.4 341.6Z" fill="url(#gPn2)" stroke="#c87000" stroke-width=".6"/>
<path d="M26.4 331Q29.8 330.4 31 333.8L29.6 335.4L25 332.4Z" fill="#f07040"/>
<path d="M19.6 341L27.6 333.4" stroke="#fff6b0" stroke-width=".9"/>
<path d="M16 346.8L17.2 342.8L19.8 345.2Z" fill="#604020"/>
<path d="M15.4 347.6Q19 346.8 21.4 345.4Q26 344.4 31.4 344.2L27.4 347.2L32.8 346.4" fill="none" stroke="#7c7c7c" stroke-width=".9"/>
<rect x="31" y="328" width="1" height="7" fill="#000084"/><rect x="32" y="329" width="1" height="5" fill="#000084"/><rect x="33" y="330" width="1" height="3" fill="#000084"/><rect x="34" y="331" width="1" height="1" fill="#000084"/></svg>
<svg style="left:12px;top:357px" width="26" height="26" viewBox="12 357 26 26" >
<rect x="14" y="372.9" width="17" height="1.2" fill="#34507c"/>
<path d="M29.6 369.2L34.4 373.5L29.6 377.9Z" fill="#1c4494"/>
<rect x="31" y="359" width="1" height="7" fill="#000084"/><rect x="32" y="360" width="1" height="5" fill="#000084"/><rect x="33" y="361" width="1" height="3" fill="#000084"/><rect x="34" y="362" width="1" height="1" fill="#000084"/></svg>
<svg style="left:12px;top:388px" width="26" height="28" viewBox="12 388 26 28" >
<path d="M19.5 398.2H23.2V409.2H28" fill="none" stroke="#203a68" stroke-width="1.2"/>
<rect x="14.6" y="395.6" width="5" height="5" fill="#fff" stroke="#4870b8" stroke-width="1.1"/>
<rect x="28.4" y="406.6" width="5.2" height="5.2" fill="#fff" stroke="#4870b8" stroke-width="1.1"/>
<rect x="31" y="390" width="1" height="7" fill="#000084"/><rect x="32" y="391" width="1" height="5" fill="#000084"/><rect x="33" y="392" width="1" height="3" fill="#000084"/><rect x="34" y="393" width="1" height="1" fill="#000084"/></svg>
<svg style="left:12px;top:427px" width="26" height="26" viewBox="12 427 26 26" >
<path d="M19 448.6Q24.6 453 31.4 447.6" fill="none" stroke="#8c8c8c" stroke-width="1.2" opacity=".55"/>
<path d="M19.78 435.69A7.7 7.7 0 1 0 29.64 436.56L29.8 434.4L22.2 434.4L25.2 441.6L27.45 438.75A4.6 4.6 0 1 1 21.56 438.23Z" fill="#fff" stroke="#000" stroke-width="1" stroke-linejoin="round"/>
<rect x="31" y="429" width="1" height="7" fill="#000084"/><rect x="32" y="430" width="1" height="5" fill="#000084"/><rect x="33" y="431" width="1" height="3" fill="#000084"/><rect x="34" y="432" width="1" height="1" fill="#000084"/></svg>
<svg style="left:12px;top:458px" width="26" height="26" viewBox="12 458 26 26" >
<rect x="16.8" y="463" width="2" height="19.4" fill="#403060"/>
<rect x="20.5" y="464.5" width="8.2" height="6" fill="url(#gYs)" stroke="#d07800" stroke-width="1"/>
<rect x="20.5" y="472.5" width="10.4" height="8.4" fill="url(#gB2)" stroke="#2860d8" stroke-width="1"/>
<rect x="31" y="460" width="1" height="7" fill="#000084"/><rect x="32" y="461" width="1" height="5" fill="#000084"/><rect x="33" y="462" width="1" height="3" fill="#000084"/><rect x="34" y="463" width="1" height="1" fill="#000084"/></svg>
<svg style="left:12px;top:489px" width="26" height="26" viewBox="12 489 26 26" >
<rect x="14.5" y="494.5" width="9" height="9" fill="url(#gYs)" stroke="#d07800" stroke-width="1"/>
<rect x="24.6" y="504.5" width="9" height="9" fill="url(#gYs)" stroke="#d07800" stroke-width="1"/>
<rect x="19.5" y="499.5" width="9.4" height="9.2" fill="url(#gB2)" stroke="#2860d8" stroke-width="1"/>
<rect x="31" y="491" width="1" height="7" fill="#000084"/><rect x="32" y="492" width="1" height="5" fill="#000084"/><rect x="33" y="493" width="1" height="3" fill="#000084"/><rect x="34" y="494" width="1" height="1" fill="#000084"/></svg>
<svg style="left:11px;top:528px" width="28" height="26" viewBox="11 528 28 26" >
<defs><linearGradient id="gGr" x1="0" y1="0" x2="1" y2="1"><stop offset="0" stop-color="#38c838"/><stop offset="1" stop-color="#087810"/></linearGradient>
<linearGradient id="gRd" x1="0" y1="0" x2="0" y2="1"><stop offset="0" stop-color="#ff5a10"/><stop offset="1" stop-color="#e02010"/></linearGradient>
<linearGradient id="gYl" x1="0" y1="0" x2="0" y2="1"><stop offset="0" stop-color="#fff200"/><stop offset="1" stop-color="#ffc800"/></linearGradient>
<linearGradient id="gBl" x1="0" y1="0" x2="1" y2="0"><stop offset="0" stop-color="#90d0ff"/><stop offset="1" stop-color="#2080f0"/></linearGradient></defs>
<path d="M21.8 542.4L16.57 537.17A7.4 7.4 0 0 0 16.57 547.63Z" fill="url(#gGr)" stroke="#0a5a14" stroke-width=".7" stroke-dasharray="1 .6"/>
<path d="M26.2 542.4L21.39 537.59A6.8 6.8 0 0 1 31.01 537.59Z" fill="url(#gYl)"/>
<path d="M26.2 542.4L31.01 537.59A6.8 6.8 0 0 1 31.01 547.21Z" fill="url(#gBl)"/>
<path d="M26.2 542.4L31.01 547.21A6.8 6.8 0 0 1 21.39 547.21Z" fill="url(#gRd)"/>
<path d="M26.2 542.4L21.39 537.59A6.8 6.8 0 1 1 21.39 547.21Z" fill="none" stroke="#1c3c90" stroke-width=".9" stroke-linejoin="round"/>
<path d="M20.4 536.6L26.2 542.4L20.4 548.2" fill="none" stroke="#f4f4f4" stroke-width=".7" opacity=".7"/>
<rect x="31" y="530" width="1" height="7" fill="#000084"/><rect x="32" y="531" width="1" height="5" fill="#000084"/><rect x="33" y="532" width="1" height="3" fill="#000084"/><rect x="34" y="533" width="1" height="1" fill="#000084"/></svg>
<svg style="left:11px;top:570px" width="28" height="24" viewBox="11 570 28 24" >
<defs><linearGradient id="gTb" x1="0" y1="0" x2="1" y2="0"><stop offset="0" stop-color="#68b8ff"/><stop offset="1" stop-color="#0c48e0"/></linearGradient>
<radialGradient id="gTo" cx=".32" cy=".3" r=".85"><stop offset="0" stop-color="#ecc8ff"/><stop offset=".45" stop-color="#a878d8"/><stop offset="1" stop-color="#553090"/></radialGradient></defs>
<rect x="13.5" y="572.5" width="21" height="18" fill="#f8f6ff" stroke="#1844d0" stroke-width="1"/>
<rect x="14" y="573" width="20" height="3" fill="url(#gTb)"/><rect x="14" y="576" width="20" height="1" fill="#c4dcff"/>
<ellipse cx="23.6" cy="582.8" rx="8.3" ry="5.5" fill="url(#gTo)"/>
<ellipse cx="24" cy="581.9" rx="4.6" ry="2.3" fill="#6a48a8" opacity=".75"/>
<ellipse cx="24" cy="582.7" rx="2.5" ry="1.1" fill="#fbf8ff"/>
<path d="M28.5 580.4Q31 581.8 30.4 584" fill="none" stroke="#f0d0ff" stroke-width="1.2" opacity=".8"/>
</svg>
<svg style="left:43px;top:619px" width="112" height="14" viewBox="43 619 112 14" >
<g shape-rendering="crispEdges">
<rect x="48.5" y="622.5" width="4" height="5" fill="#fff" stroke="#000" stroke-width="1"/>
<rect x="51.5" y="625.5" width="4" height="5" fill="#fff" stroke="#000" stroke-width="1"/>
<rect x="64.5" y="622.5" width="5" height="7" fill="#fff" stroke="#000" stroke-width="1"/>
<rect x="65" y="626" width="4" height="3" fill="#c0c0c0"/>
<path d="M79.5 630V622.5H87M82.5 630V625.5H87" fill="none" stroke="#000" stroke-width="1"/>
<rect x="85" y="628" width="2" height="2" fill="#000"/>
</g>
<g>
<rect x="95" y="622" width="1.6" height="8" fill="#848284"/><path d="M102.4 621.8V630.2L97.2 626Z" fill="#848284"/>
<path d="M96.9 623V630.4M102.8 622.6V630.6" stroke="#fff" stroke-width=".7"/>
<path d="M117.4 621.8V630.2L112.2 626Z" fill="#848284"/><path d="M117.8 622.6V630.6" stroke="#fff" stroke-width=".7"/>
<path d="M128 621.8V630.2L133.2 626Z" fill="#848284"/><path d="M128.4 630.7L133.4 626.6" stroke="#fff" stroke-width=".7"/>
<path d="M142.8 621.8V630.2L148 626Z" fill="#848284"/><rect x="148.6" y="622" width="1.6" height="8" fill="#848284"/>
<path d="M150.5 622.6V630.6M143.2 630.7L148 626.8" stroke="#fff" stroke-width=".7"/>
</g>
</svg>
</div></body></html>
